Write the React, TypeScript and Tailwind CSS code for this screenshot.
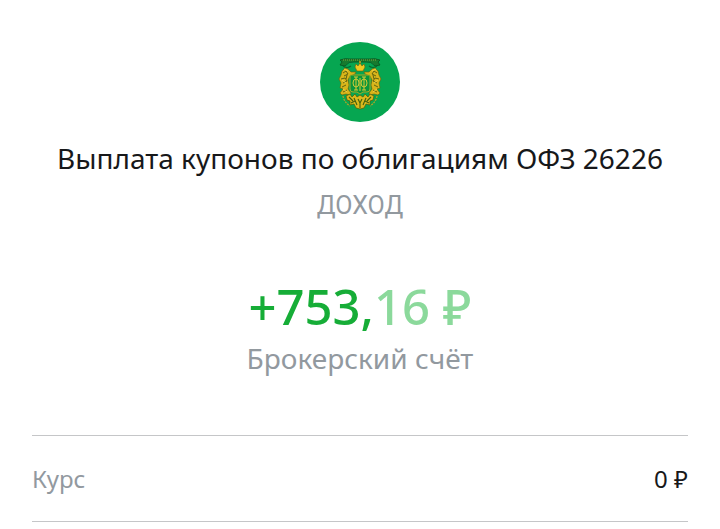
const details = [{ label: "Курс", value: "0 ₽" }];

function Emblem() {
  return (
    <svg viewBox="0 0 80 80" className="size-20" role="img" aria-label="Министерство финансов">
      <circle cx="40" cy="40" r="40" fill="#06a651" />

      {/* ribbon */}
      <path
        d="M20 18 Q25 16 30 17 H50 Q55 16 60 18 L58 20 L60 23 L55 24 Q51 19 46 20 H34 Q29 19 25 24 L20 23 L22 20 Z"
        fill="#177a2e"
        stroke="#07511f"
        strokeWidth="0.8"
      />
      <path d="M23 18 H57" fill="none" stroke="#8fa036" strokeWidth="1" strokeDasharray="1 1" />
      <path d="M23 24 Q27 27 31 24 M57 24 Q53 27 49 24" fill="none" stroke="#0a6a2b" strokeWidth="1.2" />

      {/* crown */}
      <path d="M36 22 L38 24 L40 21 L42 24 L44 22 L45 25 L43 29 H37 L35 25 Z" fill="#ecca20" stroke="#765a08" strokeWidth="0.6" />
      <circle cx="40" cy="20" r="1" fill="#d4a91a" />

      {/* supporters */}
      <g id="supporter">
        <path
          d="M22 29 L25 26 L28 27 L31 30 L36 30 L35 32 L30 34 L28 38 L29 43 L28 47 L31 51 L30 53 L26 52 L22 53 L20 51 L23 47 L20 46 L21 41 L19 37 L21 33 Z"
          fill="#d9b51a"
          stroke="#66600c"
          strokeWidth="0.6"
        />
        <path
          d="M23 31 L26 29 L28 32 L24 34 M21 37 L25 36 L27 39 L23 41 M22 45 L26 43 M23 50 L27 48 M27 33 L26 37"
          fill="none"
          stroke="#555a0e"
          strokeWidth="0.9"
        />
        <path d="M24 27 L28 29 M22 38 L26 41 M23 47 L27 50" fill="none" stroke="#f0d750" strokeWidth="0.8" />
      </g>
      <use href="#supporter" transform="matrix(-1 0 0 1 80 0)" />

      {/* shield */}
      <path d="M30 33 H50 V47 Q50 50 47 50 H43 L40 52 L37 50 H33 Q30 50 30 47 Z" fill="#0a963b" stroke="#b9ad25" strokeWidth="0.9" />
      <path
        d="M36 35 V48 M34 35 H38 M34 48 H38 M33 41 Q33 37 36 37 Q39 37 39 41 Q39 45 36 45 Q33 45 33 41 M40 36 V49 M44 35 V48 M42 35 H46 M42 48 H46 M41 41 Q41 37 44 37 Q47 37 47 41 Q47 45 44 45 Q41 45 41 41"
        fill="none"
        stroke="#d6ca36"
        strokeWidth="1"
      />

      {/* wreath and coins below the shield */}
      <path
        d="M26 54 L30 52 L32 55 L35 52 L37 55 L40 53 L43 55 L45 52 L48 55 L50 52 L54 54 L53 58 L50 59 L50 63 L46 62 L44 66 L40 67 L36 66 L34 62 L30 63 L30 59 L27 58 Z"
        fill="#dab91d"
        stroke="#4f5a08"
        strokeWidth="0.7"
      />
      <path
        d="M29 55 L33 59 M51 55 L47 59 M34 56 L37 63 M46 56 L43 63 M38 57 L40 61 L42 57 M40 61 V66 M31 61 L35 59 M49 61 L45 59"
        fill="none"
        stroke="#3f600e"
        strokeWidth="1.1"
      />
      <path d="M23 54 Q24 60 30 64 M57 54 Q56 60 50 64" fill="none" stroke="#b5a323" strokeWidth="1.2" strokeDasharray="2 1" />
    </svg>
  );
}

export default function App() {
  return (
    <main className="min-h-screen bg-white px-8 pt-[42px] font-['Noto_Sans',sans-serif] text-[#17181a]">
      <header className="flex flex-col items-center text-center">
        <Emblem />
        <h1 className="mt-4 text-[28px] leading-10">
          Выплата купонов по облигациям ОФЗ 26226
        </h1>
        <p className="mt-2.5 font-[Roboto,sans-serif] text-[25px] leading-9 text-[#92999f]">ДОХОД</p>
      </header>

      <section className="mt-12 flex flex-col items-center text-center">
        <p className="text-[49px] leading-[68px] font-medium text-[#16ad37]">
          +753,<span className="text-[#8bd99b]">16 ₽</span>
        </p>
        <p className="text-[28px] leading-9 text-[#92999f]">Брокерский счёт</p>
      </section>

      <dl className="mt-[59px] border-t border-[#c5c6c8]">
        {details.map((item) => (
          <div
            key={item.label}
            className="flex items-center justify-between border-b border-[#c5c6c8] py-6 text-2xl leading-[37px]"
          >
            <dt className="text-[#92999f]">{item.label}</dt>
            <dd>{item.value}</dd>
          </div>
        ))}
      </dl>
    </main>
  );
}
